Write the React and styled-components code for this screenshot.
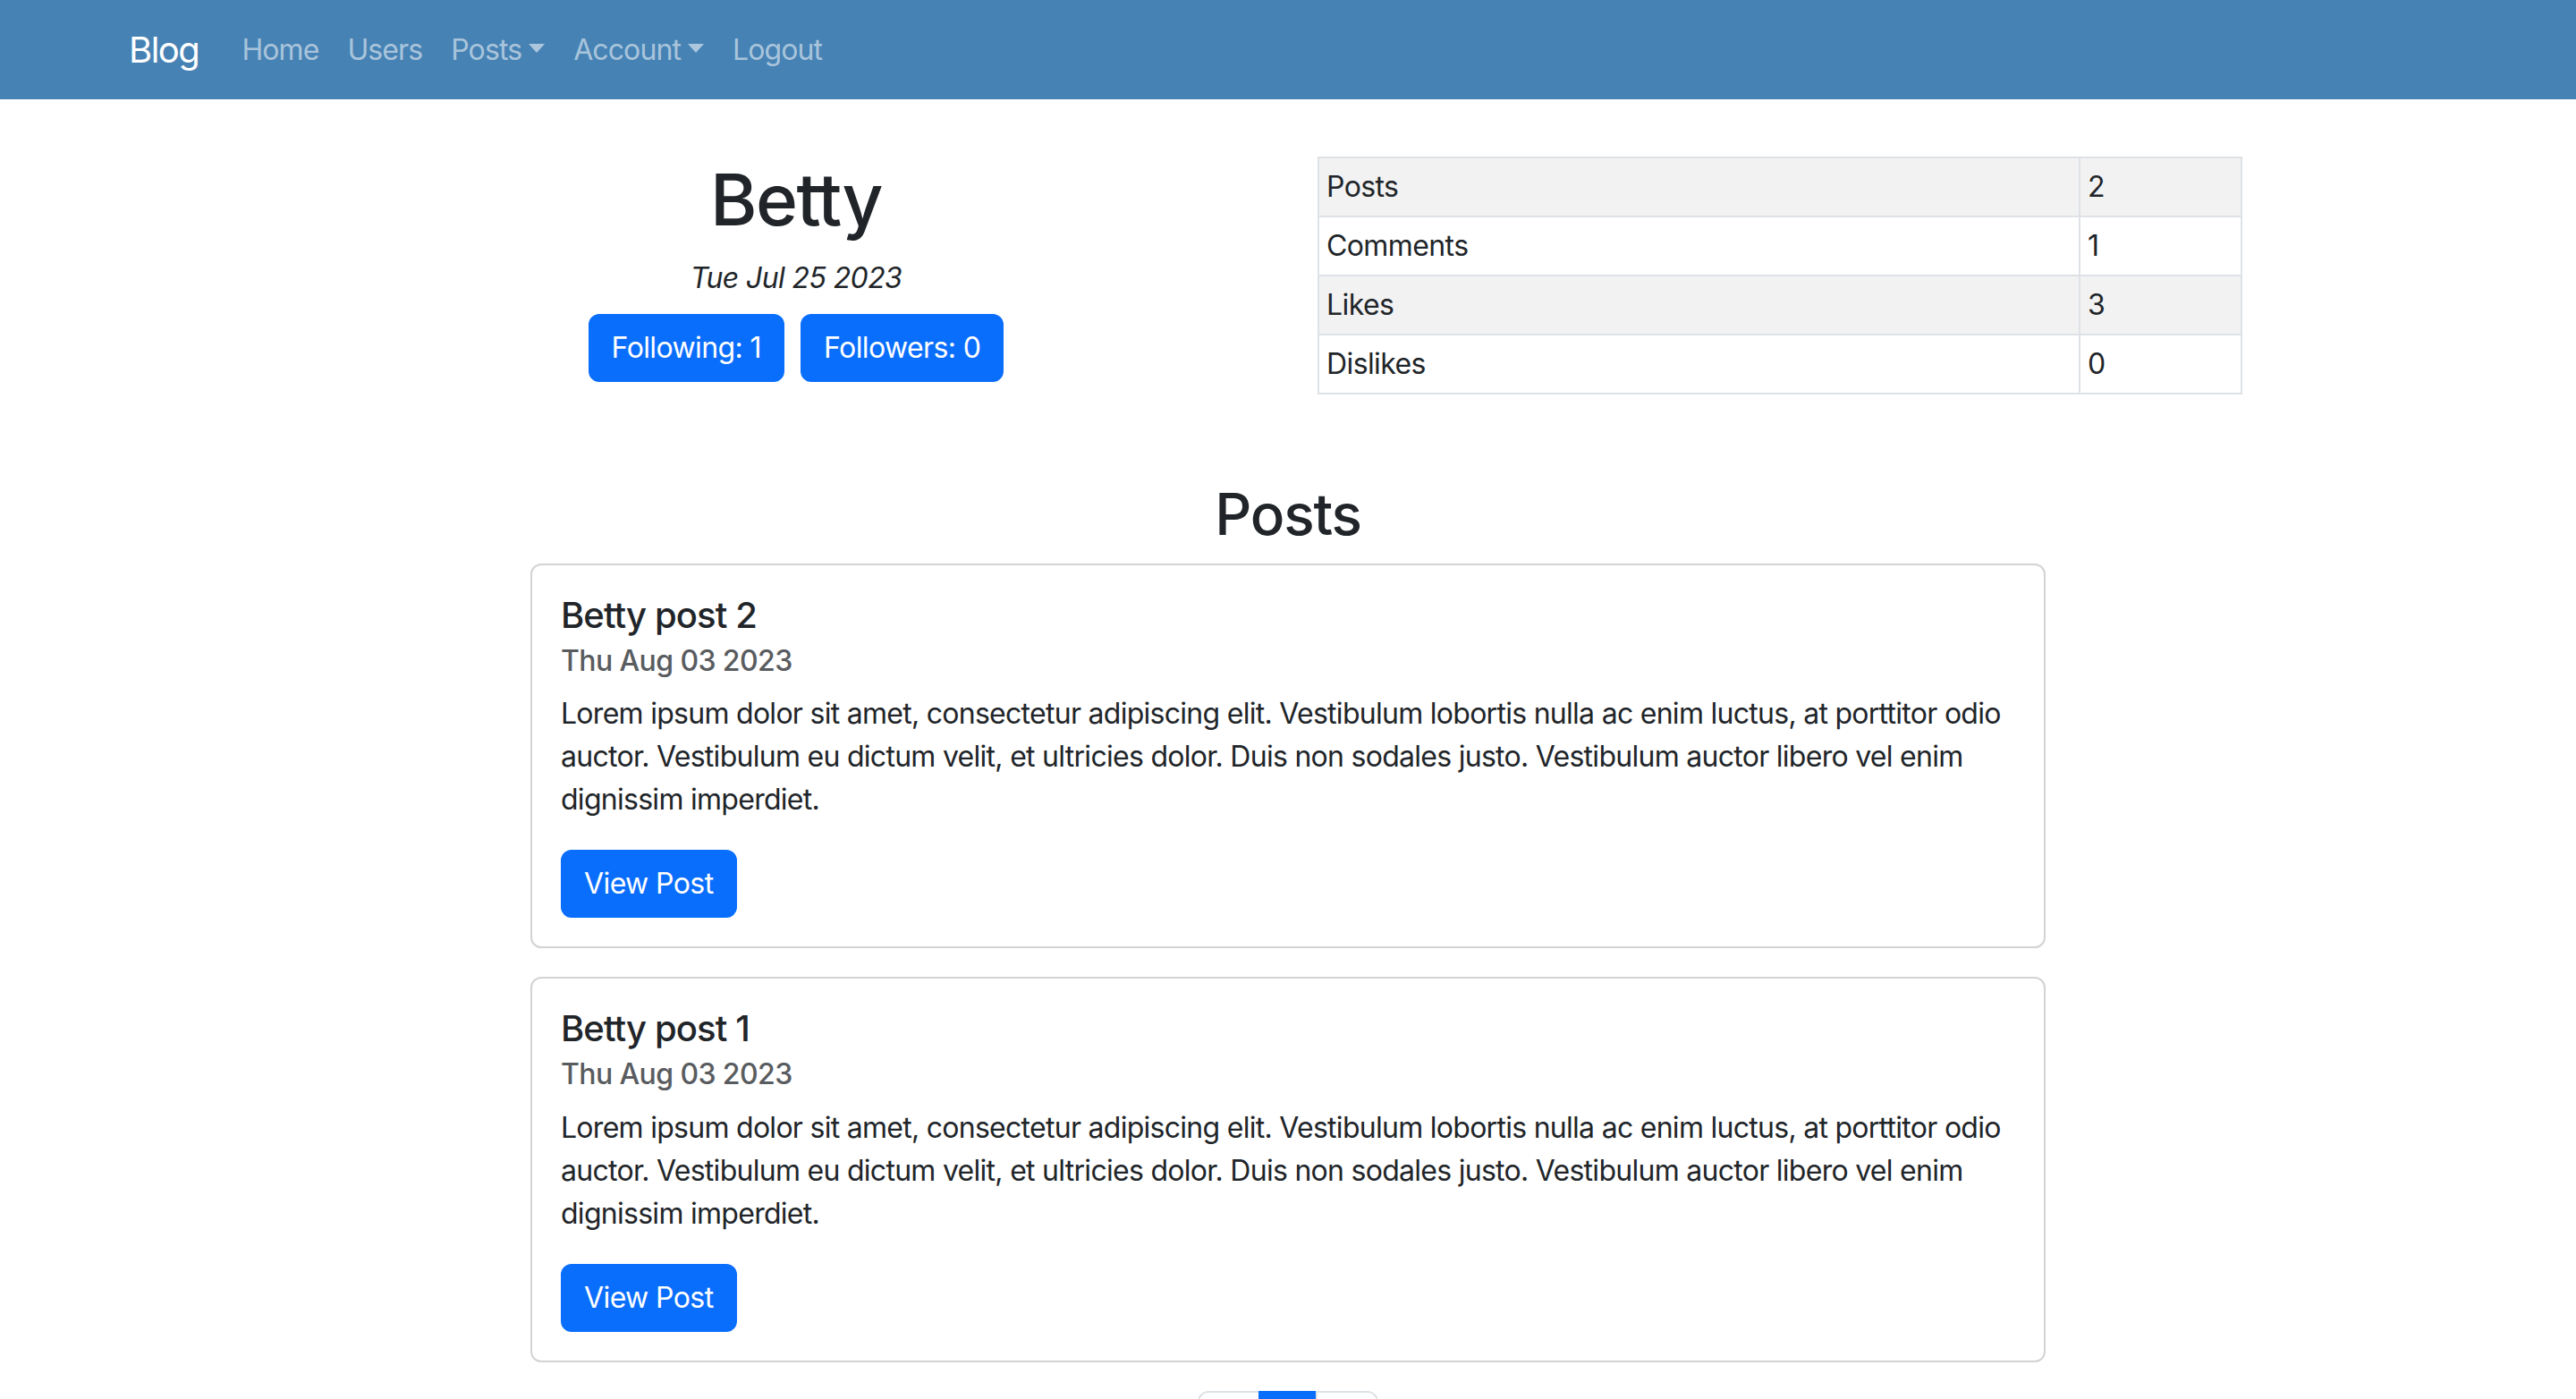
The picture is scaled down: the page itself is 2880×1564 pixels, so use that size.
import React from 'react';
import styled, { createGlobalStyle } from 'styled-components';

const GlobalStyle = createGlobalStyle`
  * {
    box-sizing: border-box;
  }

  body {
    margin: 0;
    background: #fff;
    color: #212529;
    font-family: Inter, 'Noto Sans', 'Liberation Sans', sans-serif;
    font-size: 32px;
    line-height: 1.5;
  }
`;

const Navbar = styled.nav`
  background: #4682b4;
  height: 111px;
  display: flex;
  align-items: center;
`;

const NavInner = styled.div`
  width: 100%;
  max-width: 2640px;
  margin: 0 auto;
  padding: 0 24px;
  display: flex;
  align-items: center;
`;

const Brand = styled.a`
  color: #fff;
  font-size: 40px;
  line-height: 1.5;
  margin-right: 32px;
  letter-spacing: -1.5px;
  text-decoration: none;
`;

const NavLink = styled.a`
  color: rgba(255, 255, 255, 0.55);
  font-size: 32px;
  padding: 16px;
  text-decoration: none;
  letter-spacing: -0.9px;

  ${({ $dropdown }) => $dropdown && `
    &::after {
      content: '';
      display: inline-block;
      margin-left: 8px;
      vertical-align: 8px;
      border-top: 10px solid;
      border-right: 9px solid transparent;
      border-left: 9px solid transparent;
    }
  `}
`;

const Container = styled.main`
  max-width: 2640px;
  margin: 0 auto;
  padding: 0 24px;
`;

const ProfileRow = styled.section`
  display: grid;
  grid-template-columns: 1100px 1034px;
  column-gap: 33px;
  padding-left: 196px;
  margin-top: 64px;
  align-items: start;
`;

const ProfileInfo = styled.div`
  text-align: center;
`;

const Name = styled.h1`
  font-size: 80px;
  font-weight: 500;
  line-height: 1.2;
  letter-spacing: -1.5px;
  margin: 0 0 16px;
`;

const Joined = styled.p`
  font-style: italic;
  margin: 0 0 16px;
  letter-spacing: -0.6px;
`;

const ButtonRow = styled.div`
  display: flex;
  justify-content: center;
  gap: 18px;
`;

const Button = styled.button`
  background: #0a6efd;
  border: 2px solid #0a6efd;
  border-radius: 12px;
  color: #fff;
  font-family: inherit;
  font-size: 32px;
  line-height: 48px;
  padding: 12px 24px;
  letter-spacing: -0.6px;
  cursor: pointer;
`;

const StatsTable = styled.table`
  width: 1034px;
  border-collapse: collapse;
  border: 2px solid #dee2e6;

  td {
    border: 2px solid #dee2e6;
    padding: 8px;
    line-height: 48px;
    letter-spacing: -0.6px;
  }

  td:first-child {
    width: 851px;
  }

  tr:nth-child(odd) td {
    background: #f2f2f2;
  }
`;

const SectionTitle = styled.h2`
  font-size: 64px;
  font-weight: 500;
  line-height: 1.2;
  letter-spacing: -1.2px;
  text-align: center;
  margin: 96px 0 16px;
`;

const PostList = styled.div`
  width: 1694px;
  margin: 0 auto;
`;

const Card = styled.article`
  border: 2px solid #d3d3d3;
  border-radius: 12px;
  padding: 32px;
  margin-bottom: 32px;
`;

const CardTitle = styled.h5`
  font-size: 40px;
  font-weight: 500;
  line-height: 1.2;
  letter-spacing: -0.9px;
  margin: 0 0 16px;
`;

const CardSubtitle = styled.h6`
  font-size: 32px;
  font-weight: 500;
  line-height: 1.2;
  letter-spacing: -0.6px;
  color: #595c5f;
  margin: -8px 0 16px;
`;

const CardText = styled.p`
  margin: 0 0 32px;
  letter-spacing: -0.72px;
`;

const Pagination = styled.ul`
  list-style: none;
  display: flex;
  justify-content: center;
  margin: 0;
  padding: 0 0 32px;
`;

const PageItem = styled.li`
  padding: 12px 24px;
  line-height: 48px;
  border: 2px solid ${({ $active }) => ($active ? '#0a6efd' : '#dee2e6')};
  background: ${({ $active }) => ($active ? '#0a6efd' : '#fff')};
  color: ${({ $active }) => ($active ? '#fff' : '#0a6efd')};
  margin-left: -2px;

  &:first-child {
    margin-left: 0;
    border-radius: 12px 0 0 12px;
  }

  &:last-child {
    border-radius: 0 12px 12px 0;
  }
`;

const stats = [
  ['Posts', 2],
  ['Comments', 1],
  ['Likes', 3],
  ['Dislikes', 0],
];

const lorem = 'Lorem ipsum dolor sit amet, consectetur adipiscing elit. Vestibulum lobortis nulla ac enim luctus, at porttitor odio auctor. Vestibulum eu dictum velit, et ultricies dolor. Duis non sodales justo. Vestibulum auctor libero vel enim dignissim imperdiet.';

const posts = [
  { title: 'Betty post 2', date: 'Thu Aug 03 2023' },
  { title: 'Betty post 1', date: 'Thu Aug 03 2023' },
];

const App = () => (
  <>
    <GlobalStyle />
    <Navbar>
      <NavInner>
        <Brand>Blog</Brand>
        <NavLink>Home</NavLink>
        <NavLink>Users</NavLink>
        <NavLink $dropdown>Posts</NavLink>
        <NavLink $dropdown>Account</NavLink>
        <NavLink>Logout</NavLink>
      </NavInner>
    </Navbar>
    <Container>
      <ProfileRow>
        <ProfileInfo>
          <Name>Betty</Name>
          <Joined>Tue Jul 25 2023</Joined>
          <ButtonRow>
            <Button>Following: 1</Button>
            <Button>Followers: 0</Button>
          </ButtonRow>
        </ProfileInfo>
        <StatsTable>
          <tbody>
            {stats.map(([label, value]) => (
              <tr key={label}>
                <td>{label}</td>
                <td>{value}</td>
              </tr>
            ))}
          </tbody>
        </StatsTable>
      </ProfileRow>

      <SectionTitle>Posts</SectionTitle>
      <PostList>
        {posts.map((post) => (
          <Card key={post.title}>
            <CardTitle>{post.title}</CardTitle>
            <CardSubtitle>{post.date}</CardSubtitle>
            <CardText>{lorem}</CardText>
            <Button>View Post</Button>
          </Card>
        ))}
      </PostList>
      <Pagination>
        <PageItem>«</PageItem>
        <PageItem $active>1</PageItem>
        <PageItem>»</PageItem>
      </Pagination>
    </Container>
  </>
);

export default App;
